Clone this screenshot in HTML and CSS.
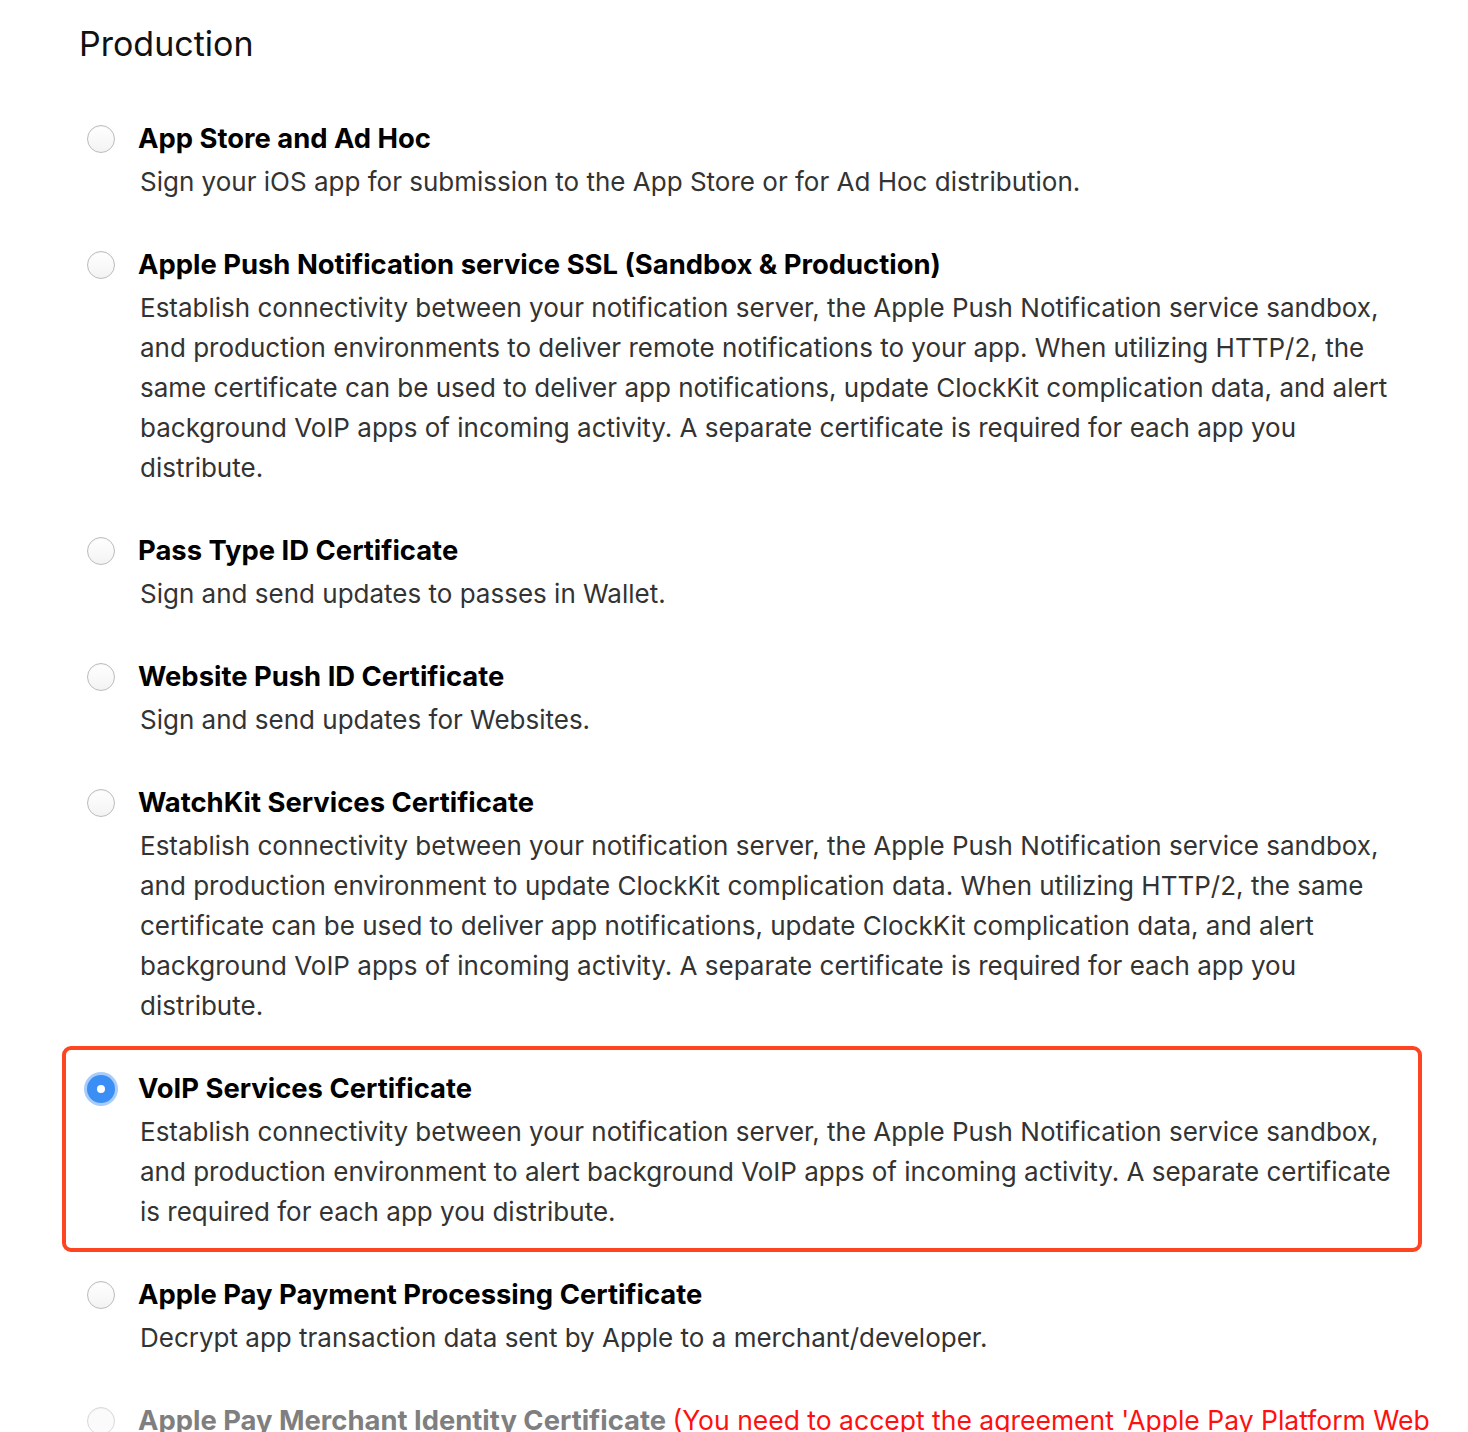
FILE: index.html
```html
<!DOCTYPE html>
<html lang="en">
<head>
<meta charset="utf-8">
<title>Production</title>
<link rel="stylesheet" href="styles.css">
</head>
<body>
<main class="page">
  <h2 class="heading">Production</h2>
  <ul class="options">
    <li class="option">
      <span class="radio"></span>
      <div class="text">
        <div class="title">App Store and Ad Hoc</div>
        <p class="desc">Sign your iOS app for submission to the App Store or for Ad Hoc distribution.</p>
      </div>
    </li>
    <li class="option">
      <span class="radio"></span>
      <div class="text">
        <div class="title">Apple Push Notification service SSL (Sandbox &amp; Production)</div>
        <p class="desc">Establish connectivity between your notification server, the Apple Push Notification service sandbox, and production environments to deliver remote notifications to your app. When utilizing HTTP/2, the same certificate can be used to deliver app notifications, update ClockKit complication data, and alert background VoIP apps of incoming activity. A separate certificate is required for each app you distribute.</p>
      </div>
    </li>
    <li class="option">
      <span class="radio"></span>
      <div class="text">
        <div class="title">Pass Type ID Certificate</div>
        <p class="desc">Sign and send updates to passes in Wallet.</p>
      </div>
    </li>
    <li class="option">
      <span class="radio"></span>
      <div class="text">
        <div class="title">Website Push ID Certificate</div>
        <p class="desc">Sign and send updates for Websites.</p>
      </div>
    </li>
    <li class="option">
      <span class="radio"></span>
      <div class="text">
        <div class="title">WatchKit Services Certificate</div>
        <p class="desc">Establish connectivity between your notification server, the Apple Push Notification service sandbox, and production environment to update ClockKit complication data. When utilizing HTTP/2, the same certificate can be used to deliver app notifications, update ClockKit complication data, and alert background VoIP apps of incoming activity. A separate certificate is required for each app you distribute.</p>
      </div>
    </li>
    <li class="option selected">
      <span class="radio checked"></span>
      <div class="text">
        <div class="title">VoIP Services Certificate</div>
        <p class="desc">Establish connectivity between your notification server, the Apple Push Notification service sandbox, and production environment to alert background VoIP apps of incoming activity. A separate certificate is required for each app you distribute.</p>
      </div>
    </li>
    <li class="option">
      <span class="radio"></span>
      <div class="text">
        <div class="title">Apple Pay Payment Processing Certificate</div>
        <p class="desc">Decrypt app transaction data sent by Apple to a merchant/developer.</p>
      </div>
    </li>
    <li class="option disabled">
      <span class="radio"></span>
      <div class="text">
        <div class="title wide">Apple Pay Merchant Identity Certificate <span class="warn">(You need to accept the agreement 'Apple Pay Platform Web Merchant Terms and Conditions' first.)</span></div>
        <p class="desc">Sign and send updates for Apple Pay merchants.</p>
      </div>
    </li>
  </ul>
</main>
</body>
</html>
```
FILE: styles.css
```css
html, body {
  margin: 0;
  padding: 0;
  background: #ffffff;
  overflow: hidden;
}

body {
  font-family: Inter, "Liberation Sans", Arial, sans-serif;
  color: #333333;
}

.page {
  padding: 0 46px 0 62px;
  width: 1360px;
}

.heading {
  margin: 0;
  padding: 22px 0 0 17px;
  height: 96px;
  box-sizing: border-box;
  font-size: 34px;
  line-height: 44px;
  font-weight: 400;
  color: #111111;
}

.options {
  list-style: none;
  margin: 0;
  padding: 0;
}

.option {
  display: flex;
  align-items: flex-start;
  gap: 23px;
  border: 4px solid transparent;
  border-radius: 9px;
  padding: 14px 20px 16px 21px;
}

.option.selected {
  border-color: #ff4422;
}

.radio {
  flex: none;
  width: 28px;
  height: 28px;
  margin-top: 11px;
  box-sizing: border-box;
  border-radius: 50%;
  border: 1px solid #bcbcbc;
  background: linear-gradient(#ffffff, #f3f3f3);
  box-shadow: inset 0 1px 1px rgba(0, 0, 0, 0.04);
  position: relative;
}

.radio.checked {
  border: none;
  background: #3b8ef3;
  box-shadow: 0 0 0 3px #a8cdfa;
}

.radio.checked::after {
  content: "";
  position: absolute;
  left: 50%;
  top: 50%;
  width: 8px;
  height: 8px;
  margin: -4px 0 0 -4px;
  border-radius: 50%;
  background: #ffffff;
}

.option.disabled .radio {
  border-color: #d8d8d8;
  background: #fbfbfb;
}

.text {
  flex: 1;
  min-width: 0;
}

.title {
  font-size: 27.4px;
  line-height: 48px;
  font-weight: 700;
  color: #000000;
}

.title.wide {
  margin-right: -50px;
}

.option.disabled .title {
  color: #7f7f7f;
}

.warn {
  font-size: 26.5px;
  font-weight: 400;
  color: #ff1010;
}

.desc {
  margin: 0;
  padding-left: 2px;
  font-size: 26px;
  line-height: 40px;
  color: #333333;
}
```
